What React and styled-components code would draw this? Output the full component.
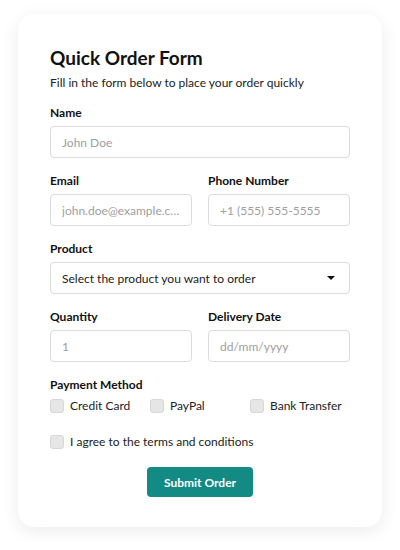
import React from "react";
import styled, { createGlobalStyle } from "styled-components";

const GlobalStyle = createGlobalStyle`
  body {
    margin: 0;
    background: #ffffff;
    font-family: Lato, "Open Sans", sans-serif;
    color: #111111;
  }
  * { box-sizing: border-box; }
`;

const Page = styled.div`
  padding: 14px 18px;
`;

const Card = styled.form`
  background: #fff;
  border-radius: 16px;
  box-shadow: 0 4px 18px rgba(0, 0, 0, 0.08);
  padding: 32px 32px 30px;
  display: flex;
  flex-direction: column;
`;

const Title = styled.h1`
  margin: 0;
  font-size: 19px;
  line-height: 23px;
  font-weight: 700;
`;

const Subtitle = styled.p`
  margin: 5px 0 12px;
  font-size: 12px;
  line-height: 18px;
  color: #222;
`;

const Field = styled.div`
  display: flex;
  flex-direction: column;
  gap: 5px;
  margin-bottom: 14px;
  min-width: 0;
`;

const Row = styled.div`
  display: grid;
  grid-template-columns: 1fr 1fr;
  gap: 16px;
`;

const Label = styled.label`
  font-size: 12px;
  line-height: 17px;
  font-weight: 700;
`;

const Input = styled.input`
  height: 32px;
  width: 100%;
  border: 1px solid #dcdcdc;
  border-radius: 4px;
  padding: 0 11px;
  font-family: inherit;
  font-size: 12px;
  color: #222;
  outline: none;
  text-overflow: ellipsis;
  &::placeholder {
    color: #a0a0a0;
  }
`;

const SelectBox = styled.div`
  height: 32px;
  border: 1px solid #dcdcdc;
  border-radius: 4px;
  padding: 0 14px 0 11px;
  display: flex;
  align-items: center;
  justify-content: space-between;
  font-size: 12px;
  color: #222;
`;

const Caret = styled.span`
  width: 0;
  height: 0;
  border-left: 4px solid transparent;
  border-right: 4px solid transparent;
  border-top: 4px solid #111;
`;

const Options = styled.div`
  display: grid;
  grid-template-columns: repeat(3, 100px);
  margin-top: 4px;
`;

const CheckLabel = styled.label`
  display: flex;
  align-items: center;
  gap: 6px;
  font-size: 12px;
  line-height: 18px;
  color: #222;
  white-space: nowrap;
`;

const Box = styled.span`
  width: 14px;
  height: 14px;
  border-radius: 3px;
  background: #e6e6e6;
  border: 1px solid #d8d8d8;
  flex-shrink: 0;
`;

const Terms = styled.div`
  margin-top: 18px;
`;

const SubmitRow = styled.div`
  display: flex;
  justify-content: center;
  margin-top: 16px;
`;

const Button = styled.button`
  background: #138a84;
  color: #fff;
  border: none;
  border-radius: 4px;
  height: 30px;
  width: 106px;
  padding: 0;
  font-family: inherit;
  font-size: 12px;
  font-weight: 700;
  cursor: pointer;
`;

function Checkbox({ children }) {
  return (
    <CheckLabel>
      <Box />
      {children}
    </CheckLabel>
  );
}

export default function App() {
  return (
    <Page>
      <GlobalStyle />
      <Card onSubmit={(e) => e.preventDefault()}>
        <Title>Quick Order Form</Title>
        <Subtitle>Fill in the form below to place your order quickly</Subtitle>

        <Field>
          <Label>Name</Label>
          <Input placeholder="John Doe" />
        </Field>

        <Row>
          <Field>
            <Label>Email</Label>
            <Input placeholder="john.doe@example.com" />
          </Field>
          <Field>
            <Label>Phone Number</Label>
            <Input placeholder="+1 (555) 555-5555" />
          </Field>
        </Row>

        <Field>
          <Label>Product</Label>
          <SelectBox>
            Select the product you want to order
            <Caret />
          </SelectBox>
        </Field>

        <Row>
          <Field>
            <Label>Quantity</Label>
            <Input placeholder="1" />
          </Field>
          <Field>
            <Label>Delivery Date</Label>
            <Input placeholder="dd/mm/yyyy" />
          </Field>
        </Row>

        <Label>Payment Method</Label>
        <Options>
          <Checkbox>Credit Card</Checkbox>
          <Checkbox>PayPal</Checkbox>
          <Checkbox>Bank Transfer</Checkbox>
        </Options>

        <Terms>
          <Checkbox>I agree to the terms and conditions</Checkbox>
        </Terms>

        <SubmitRow>
          <Button type="submit">Submit Order</Button>
        </SubmitRow>
      </Card>
    </Page>
  );
}
